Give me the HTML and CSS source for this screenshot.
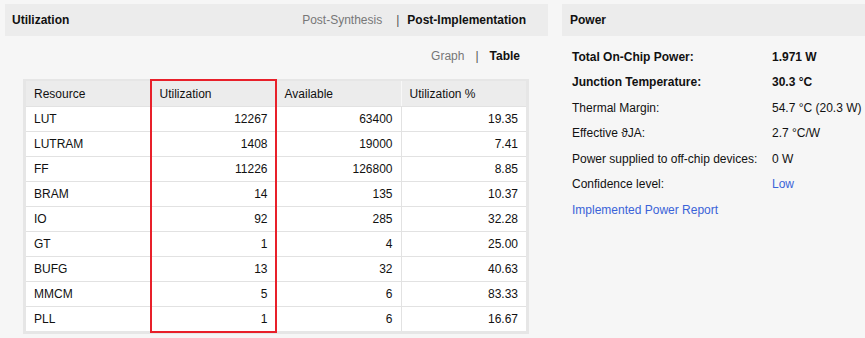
FILE: index.html
```html
<!DOCTYPE HTML>
<html>
    <head>
        <meta charset="UTF-8">
        <title>Project Summary</title>
        <link rel="stylesheet" href="styles.css">
    </head>
    <body>
        <div class="pagina">
            <div class="painel util">
                <div class="cabecalho">
                    <span class="titulo">Utilization</span>
                    <span class="abas">
                        <span class="aba">Post-Synthesis</span>
                        <span class="sep">|</span>
                        <span class="aba ativa">Post-Implementation</span>
                    </span>
                </div>
                <div class="modo">
                    <span class="aba">Graph</span>
                    <span class="sep">|</span>
                    <span class="aba ativa">Table</span>
                </div>
                <div class="tabela">
                    <table>
                        <tr>
                            <th>Resource</th>
                            <th>Utilization</th>
                            <th>Available</th>
                            <th>Utilization %</th>
                        </tr>
                        <tr><td>LUT</td><td>12267</td><td>63400</td><td>19.35</td></tr>
                        <tr><td>LUTRAM</td><td>1408</td><td>19000</td><td>7.41</td></tr>
                        <tr><td>FF</td><td>11226</td><td>126800</td><td>8.85</td></tr>
                        <tr><td>BRAM</td><td>14</td><td>135</td><td>10.37</td></tr>
                        <tr><td>IO</td><td>92</td><td>285</td><td>32.28</td></tr>
                        <tr><td>GT</td><td>1</td><td>4</td><td>25.00</td></tr>
                        <tr><td>BUFG</td><td>13</td><td>32</td><td>40.63</td></tr>
                        <tr><td>MMCM</td><td>5</td><td>6</td><td>83.33</td></tr>
                        <tr><td>PLL</td><td>1</td><td>6</td><td>16.67</td></tr>
                    </table>
                    <div class="destaque"></div>
                </div>
            </div>
            <div class="painel power">
                <div class="cabecalho">
                    <span class="titulo">Power</span>
                </div>
                <div class="lista">
                    <div class="linha forte"><span class="rotulo">Total On-Chip Power:</span><span>1.971 W</span></div>
                    <div class="linha forte"><span class="rotulo">Junction Temperature:</span><span>30.3 &deg;C</span></div>
                    <div class="linha"><span class="rotulo">Thermal Margin:</span><span>54.7 &deg;C (20.3 W)</span></div>
                    <div class="linha"><span class="rotulo">Effective &#977;JA:</span><span>2.7 &deg;C/W</span></div>
                    <div class="linha"><span class="rotulo">Power supplied to off-chip devices:</span><span>0 W</span></div>
                    <div class="linha"><span class="rotulo">Confidence level:</span><a class="link">Low</a></div>
                    <div class="linha"><a class="link">Implemented Power Report</a></div>
                </div>
            </div>
        </div>
    </body>
</html>
```

FILE: styles.css
```css
body{
    margin: 0;
    background: #f6f6f6;
    font-family: "Liberation Sans", Arial, sans-serif;
    font-size: 12px;
    color: #111;
}
.pagina{
    display: flex;
    gap: 14px;
    padding: 4px 0 0 5px;
}
.util{
    width: 543px;
}
.power{
    flex: 1;
}
.cabecalho{
    height: 32px;
    background: #ececec;
    display: flex;
    align-items: center;
    justify-content: space-between;
    padding: 0 22px 0 7px;
}
.power .cabecalho{
    padding-left: 8px;
}
.titulo{
    font-weight: bold;
}
.abas, .modo{
    display: flex;
    gap: 11px;
}
.abas .sep{
    margin-left: 3px;
    margin-right: -3px;
}
.aba{
    color: #777;
}
.aba.ativa{
    color: #111;
    font-weight: bold;
}
.sep{
    color: #555;
}
.modo{
    justify-content: flex-end;
    height: 38px;
    align-items: center;
    padding-right: 28px;
    margin-top: 1px;
}
.tabela{
    position: relative;
    width: 500px;
    margin: 4px 0 0 18px;
    border: 3px solid #e6e6e6;
    border-top-width: 2px;
}
table{
    width: 100%;
    border-collapse: collapse;
    table-layout: fixed;
}
th, td{
    height: 24px;
    padding: 0 8px;
    border-left: 1px solid #e2e2e2;
    border-bottom: 1px solid #e2e2e2;
    font-weight: normal;
}
th:first-child, td:first-child{
    border-left: 0;
}
th{
    background: #ececec;
    text-align: left;
    border-left-color: #f8f8f8;
    padding-top: 1px;
}
td{
    background: #fff;
    text-align: right;
}
td:first-child{
    text-align: left;
}
tr:last-child td{
    border-bottom: 0;
}
.destaque{
    position: absolute;
    left: 124px;
    top: -2px;
    width: 123px;
    height: 250px;
    border: 2px solid #e8202a;
}
.lista{
    padding: 8px 0 0 10px;
}
.linha{
    height: 25.5px;
    display: flex;
    align-items: center;
}
.linha.forte{
    font-weight: bold;
}
.rotulo{
    width: 200px;
}
.link{
    color: #3a63d8;
}
```
